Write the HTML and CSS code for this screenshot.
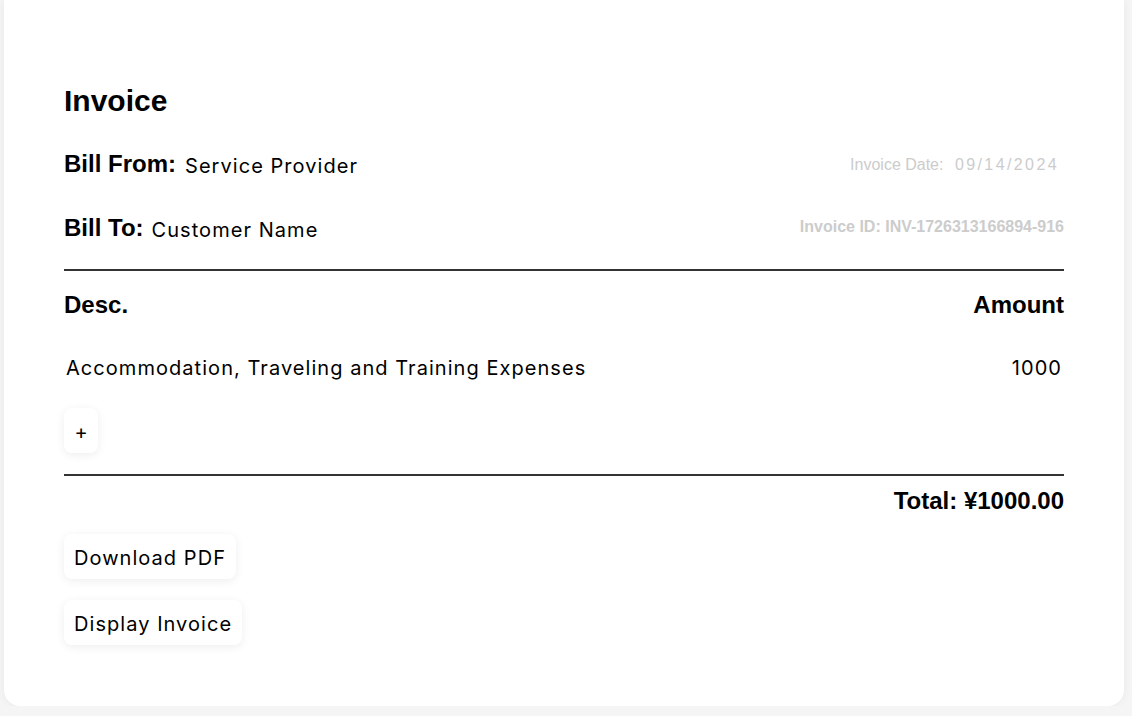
FILE: index.html
```html
<!DOCTYPE html>
<html lang="en">
<head>
<meta charset="utf-8">
<title>Invoice</title>
<link rel="stylesheet" href="styles.css">
</head>
<body>
<div class="page">
  <div class="card">
    <h1 class="title">Invoice</h1>
    <div class="info-row">
      <div class="party">
        <span class="label">Bill From:</span>
        <span class="value value-from">Service Provider</span>
      </div>
      <div class="date">
        <span class="date-label">Invoice Date:</span>
        <span class="date-value">09/14/2024</span>
      </div>
    </div>
    <div class="info-row info-row-2">
      <div class="party">
        <span class="label">Bill To:</span>
        <span class="value value-to">Customer Name</span>
      </div>
      <div class="invoice-id">Invoice ID: INV-1726313166894-916</div>
    </div>
    <div class="rule rule-top"></div>
    <div class="table-head">
      <span class="th">Desc.</span>
      <span class="th">Amount</span>
    </div>
    <div class="item-row">
      <span class="item-desc">Accommodation, Traveling and Training Expenses</span>
      <span class="item-amount">1000</span>
    </div>
    <button class="btn btn-add">+</button>
    <div class="rule rule-bottom"></div>
    <div class="total">Total: ¥1000.00</div>
    <div class="actions">
      <button class="btn">Download PDF</button>
      <button class="btn">Display Invoice</button>
    </div>
  </div>
</div>
</body>
</html>
```

FILE: styles.css
```css
html, body {
  margin: 0;
  padding: 0;
  background: #f5f5f5;
}

.page {
  padding: 0 8px 0 4px;
}

.card {
  background: #ffffff;
  width: 1000px;
  padding: 83px 60px 61px 60px;
  border-radius: 0 0 16px 16px;
  box-shadow: 0 0 8px rgba(0, 0, 0, 0.06);
  font-family: "Liberation Sans", Arial, sans-serif;
  color: #000;
}

.title {
  margin: 0;
  font-size: 30px;
  line-height: 36px;
  font-weight: 700;
}

.info-row {
  display: flex;
  justify-content: space-between;
  align-items: flex-start;
  height: 40px;
  margin-top: 25px;
}

.info-row-2 {
  margin-top: 24px;
}

.party {
  display: flex;
  align-items: flex-start;
}

.label {
  font-size: 24px;
  font-weight: 700;
  line-height: 40px;
}

.value {
  font-family: Inter, "Noto Sans", sans-serif;
  font-size: 20px;
  line-height: 40px;
  margin-top: 2px;
  letter-spacing: 1.05px;
}

.value-from {
  margin-left: 9px;
}

.value-to {
  margin-left: 8px;
}

.date {
  font-size: 16px;
  line-height: 40px;
  color: #cccccc;
  margin-right: 5px;
  margin-top: 1px;
}

.date-value {
  margin-left: 7px;
  letter-spacing: 2.4px;
}

.invoice-id {
  font-size: 16px;
  font-weight: 700;
  line-height: 37px;
  color: #cccccc;
}

.rule {
  border-top: 2px solid #333333;
}

.rule-top {
  margin-top: 21px;
}

.rule-bottom {
  margin-top: 21px;
}

.table-head {
  display: flex;
  justify-content: space-between;
  margin-top: 14px;
  height: 40px;
}

.th {
  font-size: 24px;
  font-weight: 700;
  line-height: 40px;
}

.item-row {
  display: flex;
  justify-content: space-between;
  margin-top: 23px;
  height: 40px;
  padding: 0 2px 0 2px;
  font-family: Inter, "Noto Sans", sans-serif;
  font-size: 20px;
  line-height: 40px;
  letter-spacing: 1.05px;
}

.btn {
  display: block;
  height: 45px;
  padding: 3px 10px 0 10px;
  border: none;
  border-radius: 8px;
  background: #ffffff;
  box-shadow: 0 2px 10px rgba(0, 0, 0, 0.07);
  font-family: Inter, "Noto Sans", sans-serif;
  font-size: 20px;
  letter-spacing: 1.05px;
  color: #000;
  cursor: pointer;
}

.btn-add {
  margin-top: 20px;
  width: 34px;
  padding: 2px 0 0 0;
  letter-spacing: 0;
}

.total {
  margin-top: 5px;
  text-align: right;
  font-size: 24px;
  font-weight: 700;
  line-height: 40px;
}

.actions {
  display: flex;
  flex-direction: column;
  align-items: flex-start;
  gap: 21px;
  margin-top: 13px;
}
```
